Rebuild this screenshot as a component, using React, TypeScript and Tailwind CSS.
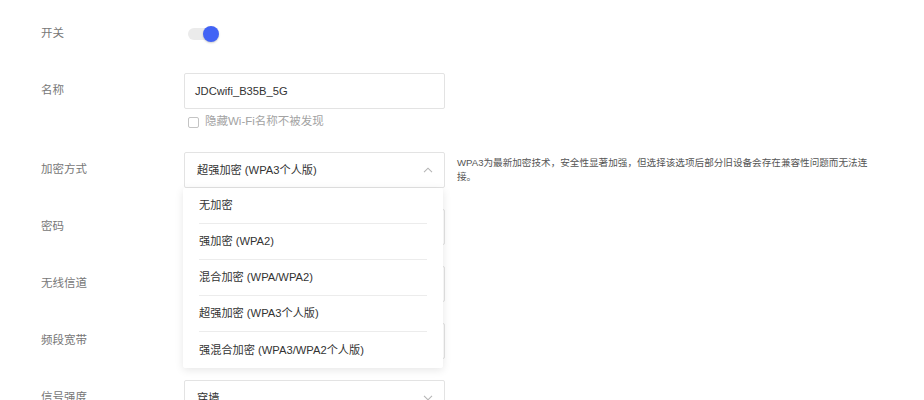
import React from 'react';

const font = { fontFamily: '"Liberation Sans", "Noto Sans CJK SC", sans-serif' };

const options = ['无加密', '强加密 (WPA2)', '混合加密 (WPA/WPA2)', '超强加密 (WPA3个人版)', '强混合加密 (WPA3/WPA2个人版)'];

const ChevronUp = () => (
  <svg width="10" height="6" viewBox="0 0 10 6" fill="none" stroke="#b5b5b5" strokeWidth="1.1">
    <path d="M1 5.2 5 1.2l4 4" />
  </svg>
);

const ChevronDown = () => (
  <svg width="10" height="6" viewBox="0 0 10 6" fill="none" stroke="#b5b5b5" strokeWidth="1.1">
    <path d="M1 0.8 5 4.8l4-4" />
  </svg>
);

const Row = ({ label, children }: { label: string; children: React.ReactNode }) => (
  <div className="flex items-start">
    <div className="w-[143px] h-9 flex items-center text-[11.5px] text-[#777]">{label}</div>
    {children}
  </div>
);

const Box = ({ children }: { children?: React.ReactNode }) => (
  <div className="w-[261px] h-9 border border-[#e3e3e3] rounded-[2px] bg-white flex items-center px-[10px] text-[11.2px] text-[#333]">
    {children}
  </div>
);

export default function App() {
  return (
    <div className="w-[924px] h-[400px] bg-white overflow-hidden" style={font}>
      <div className="pl-[41px] pt-[16px] flex flex-col gap-[21px]">
        <Row label="开关">
          <div className="h-9 flex items-center pl-[4px]">
            <div className="relative w-[27px] h-[12px] rounded-full bg-[#ebebeb]">
              <div className="absolute right-[-4px] top-[-2px] w-4 h-4 rounded-full bg-[#4263f5] shadow-[0_1px_2px_rgba(0,0,0,0.2)]" />
            </div>
          </div>
        </Row>

        <Row label="名称">
          <div className="flex flex-col">
            <Box>JDCwifi_B35B_5G</Box>
            <label className="mt-[4px] h-[18px] flex items-center gap-[6px] pl-[4px] text-[11.5px] text-[#a3a3a3]">
              <span className="w-[11px] h-[11px] border border-[#c4c4c4] rounded-[2px] bg-white" />
              隐藏Wi-Fi名称不被发现
            </label>
          </div>
        </Row>

        <Row label="加密方式">
          <div className="relative z-10">
            <div className="w-[261px] h-9 border border-[#e3e3e3] rounded-[2px] bg-white flex items-center justify-between pl-[12px] pr-[11px] text-[11.2px] text-[#333]">
              <span>超强加密 (WPA3个人版)</span>
              <ChevronUp />
            </div>
            <div className="absolute left-[-1px] top-9 w-[260px] bg-white rounded-[2px] shadow-[0_2px_8px_rgba(0,0,0,0.1)]">
              {options.map((o, i) => (
                <div key={o} className="px-[16px]">
                  <div className={`h-9 flex items-center text-[11.2px] text-[#333] ${i < options.length - 1 ? 'border-b border-[#ececec]' : ''}`}>
                    {o}
                  </div>
                </div>
              ))}
            </div>
          </div>
          <div className="ml-[12px] mt-[4px] w-[412px] text-[9.6px] leading-[14px] text-[#555]">
            WPA3为最新加密技术，安全性显著加强，但选择该选项后部分旧设备会存在兼容性问题而无法连接。
          </div>
        </Row>

        <Row label="密码">
          <Box />
        </Row>
        <Row label="无线信道">
          <Box />
        </Row>
        <Row label="频段宽带">
          <Box />
        </Row>
        <Row label="信号强度">
          <div className="w-[261px] h-9 border border-[#e3e3e3] rounded-[2px] bg-white flex items-center justify-between pl-[12px] pr-[11px] text-[11.2px] text-[#333]">
            <span>穿墙</span>
            <ChevronDown />
          </div>
        </Row>
      </div>
    </div>
  );
}
